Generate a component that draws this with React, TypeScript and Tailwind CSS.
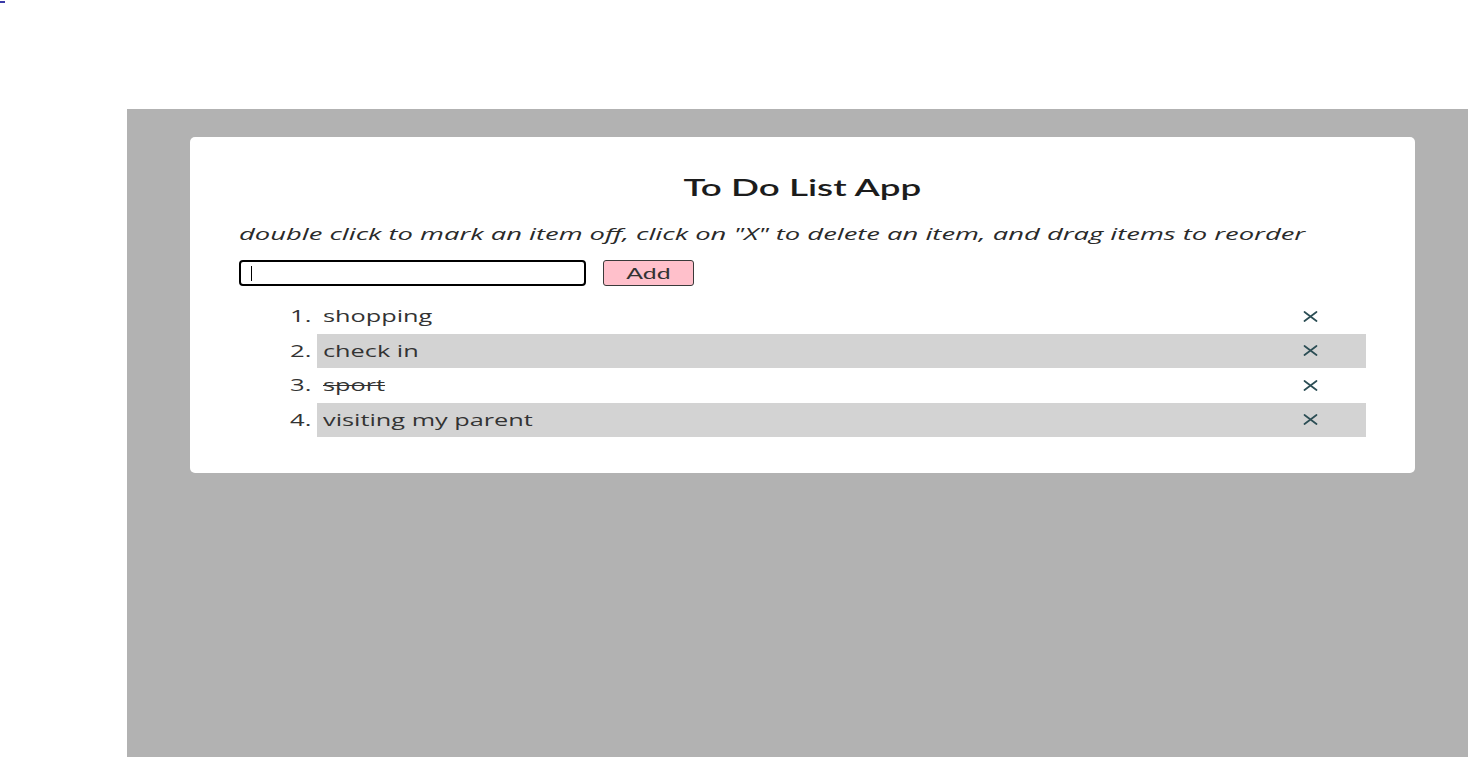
import React from "react";

const items = [
  { text: "shopping", done: false },
  { text: "check in", done: false },
  { text: "sport", done: true },
  { text: "visiting my parent", done: false },
];

function XIcon() {
  return (
    <svg width="15" height="11" viewBox="0 0 15 11" fill="none">
      <path d="M1.5 1 L13.5 10 M13.5 1 L1.5 10" stroke="#2c4e55" strokeWidth="1.7" strokeLinecap="round" />
    </svg>
  );
}

export default function App() {
  return (
    <div className="w-full h-[757px] bg-white flex flex-col overflow-hidden">
      <div className="h-[109px] shrink-0">
        <div className="w-[5px] h-[2px] mt-[1px] bg-[#3a3aa8]" />
      </div>
      <div className="flex-1 ml-[127px] bg-[#b2b2b2] pt-[28px] pl-[63px]">
        <div className="w-[1225px] h-[336px] bg-white rounded-[5px] flex flex-col pt-[35px]">
          <div className="h-[30px] flex justify-center items-center">
            <span className="inline-block scale-x-[1.6] text-[23px] font-semibold text-[#1c1c1c] [font-family:Lato,sans-serif] leading-none">
              To Do List App
            </span>
          </div>
          <div className="pl-[49px] mt-[18px] h-[26px] flex items-center">
            <span className="inline-block origin-left scale-x-[1.61] italic text-[17px] text-[#2a2a2a] [font-family:'Open_Sans',sans-serif] whitespace-nowrap leading-none">
              double click to mark an item off, click on "X" to delete an item, and drag items to reorder
            </span>
          </div>
          <div className="pl-[49px] mt-[14px] flex items-center gap-[17px]">
            <div className="relative w-[347px] h-[26px] border-2 border-black rounded-[4px] bg-white">
              <span className="absolute left-[10px] top-[4px] w-[1px] h-[15px] bg-black" />
            </div>
            <button className="w-[91px] h-[26px] bg-[#ffc0cb] border border-[#3a3a3a] rounded-[3px] flex items-center justify-center">
              <span className="inline-block scale-x-[1.65] text-[15px] text-[#333] [font-family:Lato,sans-serif] leading-none">
                Add
              </span>
            </button>
          </div>
          <ol className="mt-[13px] flex flex-col">
            {items.map((it, i) => (
              <li key={i} className="flex h-[34.5px] items-center">
                <div className="w-[127px] flex justify-end pr-[6px]">
                  <span className="inline-block origin-right scale-x-[1.6] text-[16px] text-[#333] [font-family:'Open_Sans',sans-serif] leading-none">
                    {i + 1}.
                  </span>
                </div>
                <div
                  className={
                    "w-[1049px] h-full flex items-center justify-between pl-[6px] pr-[48px] " +
                    (i % 2 === 1 ? "bg-[#d3d3d3]" : "bg-white")
                  }
                >
                  <span
                    className={
                      "inline-block origin-left scale-x-[1.58] text-[16px] text-[#333] [font-family:'Open_Sans',sans-serif] leading-none whitespace-nowrap " +
                      (it.done ? "line-through" : "")
                    }
                  >
                    {it.text}
                  </span>
                  <XIcon />
                </div>
              </li>
            ))}
          </ol>
        </div>
      </div>
    </div>
  );
}
